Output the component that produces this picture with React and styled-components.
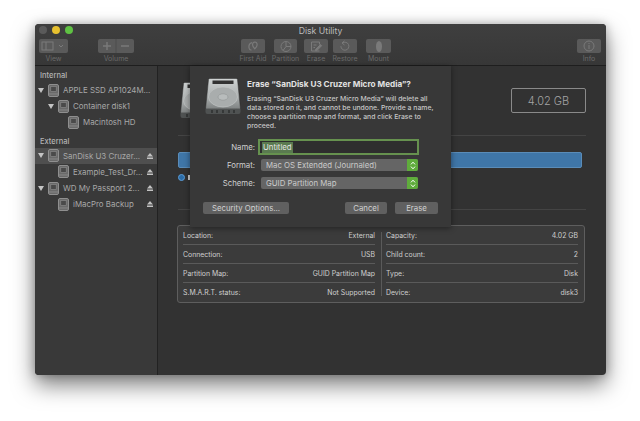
import React from 'react';
import styled, { createGlobalStyle } from 'styled-components';

const GlobalStyle = createGlobalStyle`
  html, body {
    margin: 0;
    background: #fff;
    font-family: 'Inter', 'Liberation Sans', sans-serif;
  }
`;

const Page = styled.div`
  width: 640px;
  height: 421px;
  padding: 24px 34px 46px 35px;
  box-sizing: border-box;
  overflow: hidden;
`;

const Win = styled.div`
  position: relative;
  height: 100%;
  display: flex;
  flex-direction: column;
  background: #323232;
  border-radius: 4px;
  box-shadow: 0 10px 22px rgba(0, 0, 0, 0.5), 0 0 10px rgba(0, 0, 0, 0.25);
  overflow: hidden;
`;

const TitleBar = styled.div`
  height: 42px;
  flex: none;
  background: linear-gradient(#3f3f3f, #373737);
  border-bottom: 1px solid #1e1e1e;
  box-sizing: border-box;
  position: relative;
`;

const Lights = styled.div`
  display: flex;
  gap: 5px;
  padding: 2px 0 0 4px;
`;

const Light = styled.span`
  width: 8px;
  height: 8px;
  border-radius: 50%;
  background: ${({ $color }) => $color};
`;

const Title = styled.div`
  position: absolute;
  top: 2px;
  left: 0;
  right: 0;
  text-align: center;
  font-size: 8.7px;
  line-height: 11px;
  color: #bcbcbc;
`;

const Toolbar = styled.div`
  display: flex;
  padding: 5px 5px 0 4px;
`;

const ToolGroup = styled.div`
  width: ${({ $w }) => $w}px;
  margin-left: ${({ $ml }) => $ml || 0}px;
  display: flex;
  flex-direction: column;
  align-items: center;
  flex: none;
`;

const ToolButton = styled.div`
  width: 100%;
  height: 14px;
  border-radius: 2px;
  background: #5a5a5a;
  display: flex;
  align-items: center;
  justify-content: center;
`;

const ToolLabel = styled.div`
  margin-top: 1px;
  font-size: 7px;
  line-height: 10px;
  color: #6b6b6b;
  white-space: nowrap;
`;

const Body = styled.div`
  flex: 1;
  display: flex;
  min-height: 0;
`;

const Sidebar = styled.div`
  width: 123px;
  flex: none;
  box-sizing: border-box;
  background: #393939;
  border-right: 1px solid #222;
  padding-top: 4px;
`;

const SideHead = styled.div`
  height: 12px;
  padding-left: 5px;
  font-size: 7.5px;
  line-height: 12px;
  font-weight: 500;
  color: #b4b4b4;
  margin-top: ${({ $mt }) => $mt || 0}px;
`;

const Row = styled.div`
  height: 16.2px;
  display: flex;
  align-items: center;
  padding-left: ${({ $level }) => 3 + $level * 10}px;
  padding-right: 4px;
  background: ${({ $active }) => ($active ? '#4f4f4f' : 'transparent')};
`;

const Arrow = styled.span`
  width: 0;
  height: 0;
  flex: none;
  border-left: 3px solid transparent;
  border-right: 3px solid transparent;
  border-top: 5px solid #c4c4c4;
  margin-right: 4px;
`;

const ArrowGap = styled.span`
  width: 10px;
  flex: none;
`;

const RowName = styled.span`
  flex: 1;
  min-width: 0;
  margin-left: 4px;
  font-size: 7.9px;
  color: #a8a8a8;
  white-space: nowrap;
`;

const Main = styled.div`
  flex: 1;
  min-width: 0;
  padding: 22px 20px 0 20px;
  display: flex;
  flex-direction: column;
`;

const Summary = styled.div`
  display: flex;
  justify-content: flex-end;
  height: 25px;
`;

const SizeBox = styled.div`
  width: 75px;
  height: 25px;
  box-sizing: border-box;
  border: 1px solid #8a8a8a;
  border-radius: 2px;
  display: flex;
  align-items: center;
  justify-content: center;
  font-size: 11px;
  font-weight: 300;
  color: #a4a4a4;
`;

const Rule = styled.div`
  height: 1px;
  background: #444;
  margin-top: ${({ $mt }) => $mt}px;
`;

const UsageBar = styled.div`
  height: 16px;
  width: 404px;
  margin-top: 16px;
  background: #3f76a8;
  border: 1px solid #5a8cb8;
  box-sizing: border-box;
  border-radius: 2px;
`;

const Legend = styled.div`
  margin-top: 5px;
  height: 9px;
  display: flex;
  align-items: center;
  gap: 3px;
`;

const LegendDot = styled.span`
  width: 7px;
  height: 7px;
  flex: none;
  box-sizing: border-box;
  border-radius: 50%;
  background: #2b6ca8;
  border: 1px solid #5d9dd6;
`;

// only the first sliver of the legend label shows from under the sheet
const LegendSliver = styled.span`
  width: 4px;
  height: 5px;
  background: #cfcfcf;
`;

const InfoTable = styled.div`
  margin: 15px 1px 0 -1px;
  height: 78px;
  box-sizing: border-box;
  border: 1px solid #5e5e5e;
  border-radius: 3px;
  background: #3b3b3b;
  display: grid;
  grid-template-columns: 1fr 1fr;
`;

const InfoCol = styled.div`
  position: relative;
  padding: 0 6px 0 5px;
  &::before {
    content: '';
    display: ${({ $split }) => ($split ? 'block' : 'none')};
    position: absolute;
    left: 0;
    top: 6px;
    bottom: 6px;
    width: 1px;
    background: #5a5a5a;
  }
`;

const InfoRow = styled.div`
  height: 19px;
  box-sizing: border-box;
  display: flex;
  align-items: center;
  justify-content: space-between;
  font-size: 6.9px;
  color: #cfcfcf;
  border-bottom: ${({ $last }) => ($last ? 'none' : '1px solid #5a5a5a')};
`;

const Sheet = styled.div`
  position: absolute;
  left: 155px;
  top: 42px;
  width: 261px;
  height: 161px;
  box-sizing: border-box;
  background: #383838;
  box-shadow: 0 1px 6px rgba(0, 0, 0, 0.45);
  padding: 12px 13px 0 15px;
`;

const SheetHead = styled.div`
  display: flex;
  gap: 6px;
`;

const SheetIcon = styled.svg`
  flex: none;
`;

const SheetText = styled.div`
  flex: 1;
`;

const SheetTitle = styled.div`
  font-size: 8.2px;
  line-height: 12px;
  font-weight: 700;
  color: #e2e2e2;
  white-space: nowrap;
`;

const SheetBody = styled.div`
  margin-top: 3.5px;
  font-size: 6.85px;
  line-height: 9px;
  font-weight: 500;
  color: #c6c6c6;
  white-space: nowrap;
`;

const Form = styled.div`
  margin-top: 8.5px;
  display: grid;
  grid-template-columns: 50px 161px;
  grid-auto-rows: 18px;
  column-gap: 3px;
  align-items: center;
`;

const FieldLabel = styled.div`
  font-size: 7.8px;
  color: #cfcfcf;
  text-align: right;
`;

const NameInput = styled.div`
  height: 16px;
  box-sizing: border-box;
  background: #2e2e2e;
  border: 2px solid #66914f;
  display: flex;
  align-items: center;
  padding-left: 2px;
  font-size: 7.8px;
  color: #e4e4e4;
`;

const Selected = styled.span`
  background: #5a7a50;
  padding: 0 1px;
  line-height: 11px;
`;

const Select = styled.div`
  height: 12px;
  margin-left: 3px;
  width: 157px;
  border-radius: 2px;
  background: #656565;
  display: flex;
  align-items: center;
  justify-content: space-between;
  padding-left: 5px;
  box-sizing: border-box;
  font-size: 7.8px;
  color: #cacaca;
  overflow: hidden;
  white-space: nowrap;
`;

const Stepper = styled.span`
  width: 11px;
  height: 100%;
  background: #5fac3c;
  display: flex;
  align-items: center;
  justify-content: center;
`;

const Actions = styled.div`
  display: flex;
  justify-content: space-between;
  margin: 10px 0 0 -2px;
`;

const ActionGroup = styled.div`
  display: flex;
  gap: 8px;
`;

const ActionButton = styled.div`
  width: ${({ $w }) => $w}px;
  height: 12px;
  border-radius: 2px;
  background: #606060;
  display: flex;
  align-items: center;
  justify-content: center;
  font-size: 7.8px;
  color: #d0d0d0;
`;

const Behind = styled.div`
  position: absolute;
  left: 145px;
  top: 58px;
`;

const DriveIcon = ({ id }) => (
  <SheetIcon width="36" height="37" viewBox="0 0 36 37">
    <defs>
      <linearGradient id={id} x1="0" y1="0" x2="0" y2="1">
        <stop offset="0" stopColor="#d0d4d4" />
        <stop offset="0.55" stopColor="#aeb2b2" />
        <stop offset="1" stopColor="#7f8383" />
      </linearGradient>
    </defs>
    <path d="M3.5 1.5Q3.7.5 5 .5h26q1.3 0 1.5 1L35.5 31H.5z" fill={`url(#${id})`} stroke="#2a2a2a" strokeWidth="0.5" />
    <rect x="7.5" y="2.5" width="21" height="3.5" fill="#333" />
    <ellipse cx="18" cy="19" rx="14.5" ry="10" fill="#a9adad" stroke="#c4c8c8" strokeWidth="0.6" />
    <ellipse cx="18" cy="19" rx="5" ry="3.2" fill="#b8bcbc" stroke="#8b8e8e" strokeWidth="0.5" />
    <path d="M.5 31h35v3q0 2-2 2H2.5q-2 0-2-2z" fill="#4f5252" />
    <path d="M7 32v3M12 32v3M18 32v3M24 32v3M29 32v3" stroke="#2c2e2e" strokeWidth="1.4" />
  </SheetIcon>
);

const SmallDrive = () => (
  <SheetIcon width="11" height="13" viewBox="0 0 11 13">
    <rect x="0.5" y="0.5" width="10" height="12" rx="1.5" fill="#6a6a6a" stroke="#8f8f8f" />
    <rect x="2.8" y="2.5" width="5.4" height="5" fill="#4a4a4a" stroke="#8f8f8f" strokeWidth="0.6" />
    <path d="M1 10h9" stroke="#8f8f8f" strokeWidth="0.8" />
  </SheetIcon>
);

const Eject = () => (
  <SheetIcon width="6" height="6" viewBox="0 0 6 6">
    <path d="M3 0l3 3.6H0z M0 4.6h6V6H0z" fill="#c2c2c2" />
  </SheetIcon>
);

const Chevrons = () => (
  <svg width="6" height="9" viewBox="0 0 6 9">
    <path d="M1 3.4L3 1.2 5 3.4M1 5.6L3 7.8 5 5.6" fill="none" stroke="#fff" strokeWidth="1" />
  </svg>
);

const iconStroke = { fill: 'none', stroke: '#7a7a7a', strokeWidth: 1 };

const tools = [
  {
    label: 'First Aid',
    w: 24,
    ml: 107,
    icon: (
      <g {...iconStroke} strokeWidth="1.2">
        <path d="M8.5 2.2c-2 0-2.6 2.6-1 5l1.3 1.6 1.4-1.6c1.6-2.4 1-5-1-5z" />
        <path d="M6 2.6C4 3 2.6 5 3 8c.3 1.6 1.4 2.2 2.4 2.2" />
      </g>
    ),
  },
  {
    label: 'Partition',
    w: 23,
    ml: 9,
    icon: (
      <g {...iconStroke}>
        <circle cx="7" cy="6.5" r="5" />
        <path d="M7 1.5v5h5M7 6.5l-3 4" />
      </g>
    ),
  },
  {
    label: 'Erase',
    w: 24,
    ml: 7,
    icon: (
      <g {...iconStroke}>
        <path d="M2.5 2h8v2.5M2.5 2v9h8" />
        <path d="M4.5 5h3M4.5 7.5h1.5" />
        <path d="M6.5 9.5l5-5 1.2 1.2-5 5H6.5z" fill="#7a7a7a" />
      </g>
    ),
  },
  {
    label: 'Restore',
    w: 24,
    ml: 5,
    icon: (
      <g {...iconStroke}>
        <path d="M4.5 3a4 4 0 1 1-1.6 3.2" />
        <path d="M6.5 0.8L4 3l2.5 2" />
      </g>
    ),
  },
  {
    label: 'Mount',
    w: 25,
    ml: 9,
    icon: <ellipse cx="7" cy="6.5" rx="3" ry="5.5" fill="#7a7a7a" />,
  },
];

const sidebar = [
  { head: 'Internal' },
  { name: 'APPLE SSD AP1024M...', level: 0, arrow: true },
  { name: 'Container disk1', level: 1, arrow: true },
  { name: 'Macintosh HD', level: 2 },
  { head: 'External', mt: 5 },
  { name: 'SanDisk U3 Cruzer...', level: 0, arrow: true, eject: true, active: true },
  { name: 'Example_Test_Dr...', level: 1, eject: true },
  { name: 'WD My Passport 2...', level: 0, arrow: true, eject: true },
  { name: 'iMacPro Backup', level: 1, eject: true },
];

const infoLeft = [
  ['Location:', 'External'],
  ['Connection:', 'USB'],
  ['Partition Map:', 'GUID Partition Map'],
  ['S.M.A.R.T. status:', 'Not Supported'],
];

const infoRight = [
  ['Capacity:', '4.02 GB'],
  ['Child count:', '2'],
  ['Type:', 'Disk'],
  ['Device:', 'disk3'],
];

const InfoColumn = ({ rows, split }) => (
  <InfoCol $split={split}>
    {rows.map(([k, v], i) => (
      <InfoRow key={k} $last={i === rows.length - 1}>
        <span>{k}</span>
        <span>{v}</span>
      </InfoRow>
    ))}
  </InfoCol>
);

const App = () => (
  <>
    <GlobalStyle />
    <Page>
      <Win>
        <TitleBar>
          <Lights>
            <Light $color="#5a5a5a" />
            <Light $color="#e6c02f" />
            <Light $color="#5fc243" />
          </Lights>
          <Title>Disk Utility</Title>
          <Toolbar>
            <ToolGroup $w={29}>
              <ToolButton>
                <svg width="25" height="10" viewBox="0 0 25 10">
                  <rect x="1" y="1" width="11" height="8" {...iconStroke} />
                  <path d="M5 1v8M18 4l2 2 2-2" {...iconStroke} />
                </svg>
              </ToolButton>
              <ToolLabel>View</ToolLabel>
            </ToolGroup>
            <ToolGroup $w={36} $ml={30}>
              <ToolButton>
                <svg width="36" height="14" viewBox="0 0 36 14">
                  <path d="M9 3v8M5 7h8M23 7h8" stroke="#7a7a7a" strokeWidth="1.4" fill="none" />
                  <path d="M18 0v14" stroke="#4c4c4c" />
                </svg>
              </ToolButton>
              <ToolLabel>Volume</ToolLabel>
            </ToolGroup>
            {tools.map(t => (
              <ToolGroup key={t.label} $w={t.w} $ml={t.ml}>
                <ToolButton>
                  <svg width="14" height="13" viewBox="0 0 14 13">{t.icon}</svg>
                </ToolButton>
                <ToolLabel>{t.label}</ToolLabel>
              </ToolGroup>
            ))}
            <ToolGroup $w={24} $ml={186}>
              <ToolButton>
                <svg width="12" height="12" viewBox="0 0 12 12">
                  <circle cx="6" cy="6" r="5" {...iconStroke} />
                  <path d="M6 5v4M6 3v1" {...iconStroke} />
                </svg>
              </ToolButton>
              <ToolLabel>Info</ToolLabel>
            </ToolGroup>
          </Toolbar>
        </TitleBar>
        <Body>
          <Sidebar>
            {sidebar.map(item =>
              item.head ? (
                <SideHead key={item.head} $mt={item.mt}>{item.head}</SideHead>
              ) : (
                <Row key={item.name} $level={item.level} $active={item.active}>
                  {item.arrow ? <Arrow /> : <ArrowGap />}
                  <SmallDrive />
                  <RowName>{item.name}</RowName>
                  {item.eject && <Eject />}
                </Row>
              )
            )}
          </Sidebar>
          <Main>
            <Summary>
              <SizeBox>4.02 GB</SizeBox>
            </Summary>
            <Rule $mt={22} />
            <UsageBar />
            <Legend>
              <LegendDot />
              <LegendSliver />
            </Legend>
            <Rule $mt={27} />
            <InfoTable>
              <InfoColumn rows={infoLeft} />
              <InfoColumn rows={infoRight} split />
            </InfoTable>
          </Main>
        </Body>
        <Behind>
          <DriveIcon id="driveBehind" />
        </Behind>
        <Sheet>
          <SheetHead>
            <DriveIcon id="driveSheet" />
            <SheetText>
              <SheetTitle>Erase “SanDisk U3 Cruzer Micro Media”?</SheetTitle>
              <SheetBody>
                Erasing “SanDisk U3 Cruzer Micro Media” will delete all<br />
                data stored on it, and cannot be undone. Provide a name,<br />
                choose a partition map and format, and click Erase to<br />
                proceed.
              </SheetBody>
            </SheetText>
          </SheetHead>
          <Form>
            <FieldLabel>Name:</FieldLabel>
            <NameInput><Selected>Untitled</Selected></NameInput>
            <FieldLabel>Format:</FieldLabel>
            <Select>Mac OS Extended (Journaled)<Stepper><Chevrons /></Stepper></Select>
            <FieldLabel>Scheme:</FieldLabel>
            <Select>GUID Partition Map<Stepper><Chevrons /></Stepper></Select>
          </Form>
          <Actions>
            <ActionButton $w={86}>Security Options...</ActionButton>
            <ActionGroup>
              <ActionButton $w={42}>Cancel</ActionButton>
              <ActionButton $w={43}>Erase</ActionButton>
            </ActionGroup>
          </Actions>
        </Sheet>
      </Win>
    </Page>
  </>
);

export default App;
